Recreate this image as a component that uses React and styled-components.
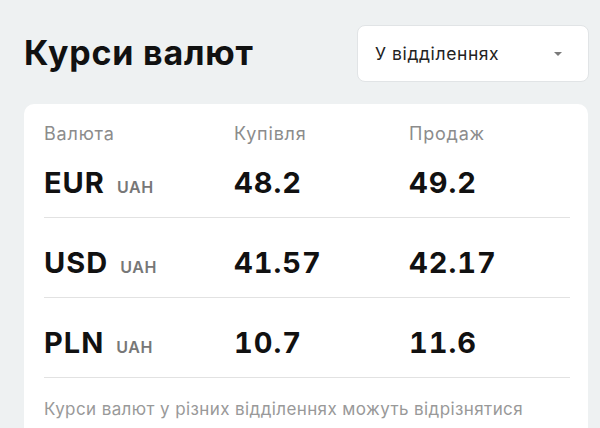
import styled, { createGlobalStyle } from "styled-components";

const GlobalStyle = createGlobalStyle`
  html, body {
    margin: 0;
    padding: 0;
    background-color: #eef1f2;
  }
  body {
    font-family: Inter, "Noto Sans", sans-serif;
  }
`;

const Page = styled.div`
  width: 600px;
  height: 428px;
  box-sizing: border-box;
  padding: 25px 11px 0 24px;
  overflow: hidden;
`;

const Header = styled.div`
  display: flex;
  justify-content: space-between;
  align-items: center;
  height: 57px;
`;

const Title = styled.h1`
  margin: 0 0 3px;
  font-size: 34px;
  font-weight: 700;
  color: #111;
  letter-spacing: 0.8px;
`;

const Select = styled.div`
  display: flex;
  align-items: center;
  justify-content: space-between;
  box-sizing: border-box;
  width: 232px;
  height: 57px;
  padding: 0 26px 0 17px;
  background-color: #fff;
  border: 1px solid #e1e4e6;
  border-radius: 8px;
  font-size: 17.5px;
  letter-spacing: 0.6px;
  color: #222;
`;

const Caret = styled.span`
  width: 0;
  height: 0;
  border-left: 4px solid transparent;
  border-right: 4px solid transparent;
  border-top: 4px solid #7a7a7a;
`;

const Card = styled.div`
  margin-top: 22px;
  margin-right: 1px;
  padding: 18px 18px 0 20px;
  height: 340px;
  background-color: #fff;
  border-radius: 10px 10px 0 0;
`;

const Grid = styled.div`
  display: grid;
  grid-template-columns: 190px 175px 1fr;
  align-items: center;
`;

const Labels = styled(Grid)`
  line-height: 24px;
  font-size: 18px;
  letter-spacing: 0.8px;
  color: #8c8c8c;
`;

const Rows = styled.div``;

const Row = styled(Grid)`
  box-sizing: border-box;
  height: 80px;
  padding-top: 30px;
  align-items: start;
  border-bottom: 1px solid #e2e2e2;

  &:first-child {
    height: 72px;
    padding-top: 22px;
  }
`;

const Currency = styled.div`
  display: flex;
  align-items: baseline;
  height: 30px;
  line-height: 30px;
`;

const Code = styled.span`
  font-size: 29px;
  font-weight: 700;
  color: #111;
  letter-spacing: 1px;
`;

const Unit = styled.span`
  margin-left: 12px;
  font-size: 16px;
  font-weight: 600;
  color: #777;
  letter-spacing: 0.6px;
`;

const Rate = styled.span`
  height: 30px;
  line-height: 30px;
  font-size: 29px;
  font-weight: 700;
  color: #111;
  letter-spacing: 1px;
  font-variant-numeric: tabular-nums;
`;

const Note = styled.p`
  margin: 0;
  padding-top: 20px;
  line-height: 22px;
  font-size: 17px;
  letter-spacing: 0.4px;
  color: #999;
  white-space: nowrap;
`;

const rates = [
  { code: "EUR", buy: "48.2", sell: "49.2" },
  { code: "USD", buy: "41.57", sell: "42.17" },
  { code: "PLN", buy: "10.7", sell: "11.6" },
];

function App() {
  return (
    <Page>
      <GlobalStyle />
      <Header>
        <Title>Курси валют</Title>
        <Select>
          У відділеннях
          <Caret />
        </Select>
      </Header>
      <Card>
        <Labels>
          <span>Валюта</span>
          <span>Купівля</span>
          <span>Продаж</span>
        </Labels>
        <Rows>
          {rates.map((r) => (
            <Row key={r.code}>
              <Currency>
                <Code>{r.code}</Code>
                <Unit>UAH</Unit>
              </Currency>
              <Rate>{r.buy}</Rate>
              <Rate>{r.sell}</Rate>
            </Row>
          ))}
        </Rows>
        <Note>Курси валют у різних відділеннях можуть відрізнятися</Note>
      </Card>
    </Page>
  );
}

export default App;
